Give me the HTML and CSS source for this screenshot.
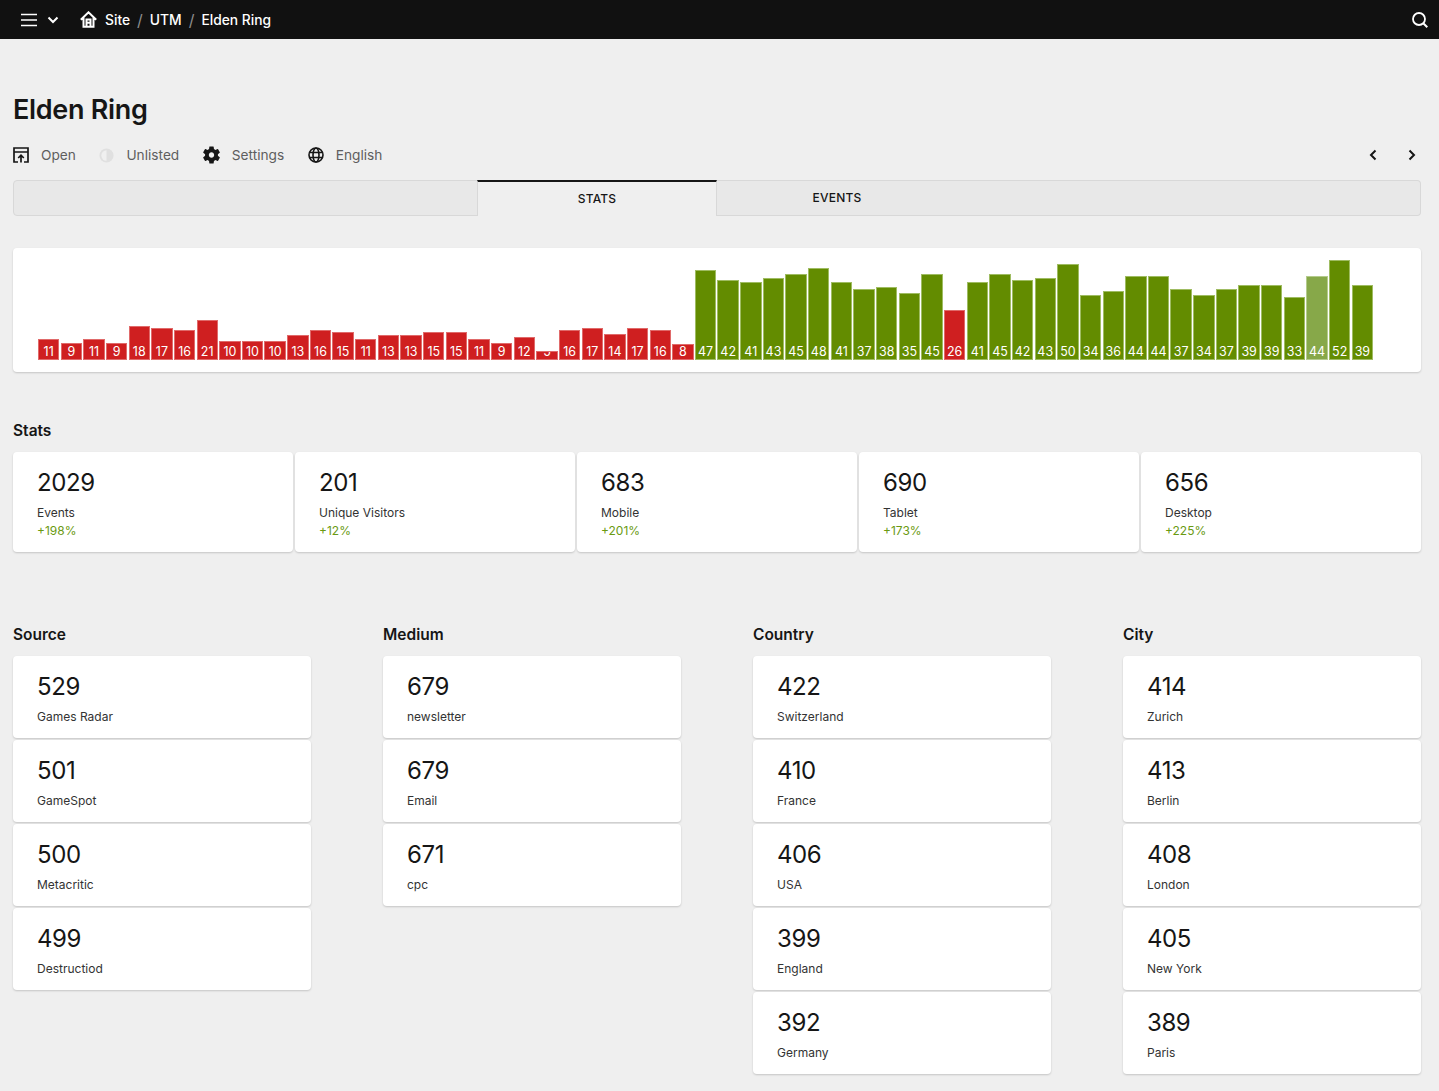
FILE: index.html
```html
<!DOCTYPE html>
<html lang="en">
<head>
<meta charset="utf-8">
<title>Elden Ring</title>
<link rel="stylesheet" href="styles.css">
</head>
<body>
<header class="topbar">
  <svg class="ico-menu" width="18" height="14" viewBox="0 0 18 14"><path d="M1 1.500h16M1 7h16M1 12.500h16" stroke="#fff" stroke-width="1.700" fill="none"/></svg>
  <svg class="ico-chev" width="12" height="8" viewBox="0 0 12 8"><path d="M1.500 1.500 6 6l4.500-4.500" stroke="#fff" stroke-width="2" fill="none"/></svg>
  <svg class="ico-home" width="17" height="17" viewBox="0 0 17 17"><path d="M.8 8.800 8.500 1.300 16.200 8.800M3.500 6.500V15.700H13.500V6.500M6.500 15.700V8.500H10.500V15.700M6.500 11.700H10.500" stroke="#fff" stroke-width="2" fill="none"/></svg>
  <nav class="crumbs"><span>Site</span><i>/</i><span>UTM</span><i>/</i><span>Elden Ring</span></nav>
  <svg class="ico-search" width="18" height="18" viewBox="0 0 18 18"><circle cx="8" cy="8" r="6" stroke="#fff" stroke-width="1.800" fill="none"/><path d="m12.500 12.500 3.800 3.800" stroke="#fff" stroke-width="2" fill="none"/></svg>
</header>

<main class="page">
  <h1 class="title">Elden Ring</h1>

  <div class="meta">
    <div class="meta-item">
      <svg width="16" height="16" viewBox="0 0 16 16"><path d="M5 15H1V1H15V15H11M1 5H15" stroke="#161616" stroke-width="1.700" fill="none"/><path d="M8 15.500V8.500M5.200 11 8 8.200 10.800 11" stroke="#161616" stroke-width="1.700" fill="none"/></svg>
      <span>Open</span>
    </div>
    <div class="meta-item">
      <svg width="15" height="15" viewBox="0 0 16 16"><circle cx="8" cy="8" r="7.500" fill="#e0e0e0"/><path d="M8 2.500a5.500 5.500 0 0 0 0 11z" fill="#f0f0f0"/></svg>
      <span>Unlisted</span>
    </div>
    <div class="meta-item">
      <svg width="17" height="18" viewBox="2.500 2 19 20"><path fill="#161616" d="M19.140 12.940c.04-.3.06-.61.06-.94 0-.32-.02-.64-.07-.94l2.030-1.580a.49.49 0 0 0 .12-.61l-1.920-3.320a.488.488 0 0 0-.59-.22l-2.390.96c-.5-.38-1.030-.7-1.620-.94l-.36-2.540a.484.484 0 0 0-.48-.41h-3.840c-.24 0-.43.17-.47.41l-.36 2.540c-.59.24-1.130.57-1.620.94l-2.390-.96c-.22-.08-.47 0-.59.22L2.740 8.870c-.12.21-.08.47.12.61l2.030 1.580c-.05.3-.09.63-.09.94s.02.64.07.94l-2.030 1.580a.49.49 0 0 0-.12.61l1.920 3.320c.12.22.37.29.59.22l2.390-.96c.5.38 1.030.7 1.620.94l.36 2.540c.05.24.24.41.48.41h3.840c.24 0 .44-.17.47-.41l.36-2.540c.59-.24 1.130-.56 1.620-.94l2.390.96c.22.08.47 0 .59-.22l1.920-3.320c.12-.22.07-.47-.12-.61l-2.010-1.580zM12 15c-1.650 0-3-1.350-3-3s1.350-3 3-3 3 1.350 3 3-1.350 3-3 3z"/></svg>
      <span>Settings</span>
    </div>
    <div class="meta-item">
      <svg width="16" height="16" viewBox="0 0 16 16"><g stroke="#161616" stroke-width="1.600" fill="none"><circle cx="8" cy="8" r="7"/><ellipse cx="8" cy="8" rx="3" ry="7"/><path d="M1.500 5.500h13M1.500 10.500h13"/></g></svg>
      <span>English</span>
    </div>
    <div class="pager">
      <svg width="10" height="12" viewBox="0 0 10 12"><path d="M7.500 1.500 3 6l4.500 4.500" stroke="#161616" stroke-width="2" fill="none"/></svg>
      <svg width="10" height="12" viewBox="0 0 10 12"><path d="M2.500 1.500 7 6l-4.500 4.500" stroke="#161616" stroke-width="2" fill="none"/></svg>
    </div>
  </div>

  <div class="tabs">
    <div class="tab-fill tab-lead"></div>
    <div class="tab tab-active">STATS</div>
    <div class="tab tab-plain">EVENTS</div>
    <div class="tab-fill tab-trail"></div>
  </div>

  <section class="card chart">
    <div class="bars">
      <div class="bar lo" style="height:21px"><span>11</span></div>
      <div class="bar lo" style="height:17px"><span>9</span></div>
      <div class="bar lo" style="height:21px"><span>11</span></div>
      <div class="bar lo" style="height:17px"><span>9</span></div>
      <div class="bar lo" style="height:34px"><span>18</span></div>
      <div class="bar lo" style="height:32px"><span>17</span></div>
      <div class="bar lo" style="height:30px"><span>16</span></div>
      <div class="bar lo" style="height:40px"><span>21</span></div>
      <div class="bar lo" style="height:19px"><span>10</span></div>
      <div class="bar lo" style="height:19px"><span>10</span></div>
      <div class="bar lo" style="height:19px"><span>10</span></div>
      <div class="bar lo" style="height:25px"><span>13</span></div>
      <div class="bar lo" style="height:30px"><span>16</span></div>
      <div class="bar lo" style="height:28px"><span>15</span></div>
      <div class="bar lo" style="height:21px"><span>11</span></div>
      <div class="bar lo" style="height:25px"><span>13</span></div>
      <div class="bar lo" style="height:25px"><span>13</span></div>
      <div class="bar lo" style="height:28px"><span>15</span></div>
      <div class="bar lo" style="height:28px"><span>15</span></div>
      <div class="bar lo" style="height:21px"><span>11</span></div>
      <div class="bar lo" style="height:17px"><span>9</span></div>
      <div class="bar lo" style="height:23px"><span>12</span></div>
      <div class="bar lo" style="height:9px"><span>5</span></div>
      <div class="bar lo" style="height:30px"><span>16</span></div>
      <div class="bar lo" style="height:32px"><span>17</span></div>
      <div class="bar lo" style="height:26px"><span>14</span></div>
      <div class="bar lo" style="height:32px"><span>17</span></div>
      <div class="bar lo" style="height:30px"><span>16</span></div>
      <div class="bar lo" style="height:16px"><span>8</span></div>
      <div class="bar hi" style="height:90px"><span>47</span></div>
      <div class="bar hi" style="height:80px"><span>42</span></div>
      <div class="bar hi" style="height:78px"><span>41</span></div>
      <div class="bar hi" style="height:82px"><span>43</span></div>
      <div class="bar hi" style="height:86px"><span>45</span></div>
      <div class="bar hi" style="height:92px"><span>48</span></div>
      <div class="bar hi" style="height:78px"><span>41</span></div>
      <div class="bar hi" style="height:71px"><span>37</span></div>
      <div class="bar hi" style="height:73px"><span>38</span></div>
      <div class="bar hi" style="height:67px"><span>35</span></div>
      <div class="bar hi" style="height:86px"><span>45</span></div>
      <div class="bar lo" style="height:50px"><span>26</span></div>
      <div class="bar hi" style="height:78px"><span>41</span></div>
      <div class="bar hi" style="height:86px"><span>45</span></div>
      <div class="bar hi" style="height:80px"><span>42</span></div>
      <div class="bar hi" style="height:82px"><span>43</span></div>
      <div class="bar hi" style="height:96px"><span>50</span></div>
      <div class="bar hi" style="height:65px"><span>34</span></div>
      <div class="bar hi" style="height:69px"><span>36</span></div>
      <div class="bar hi" style="height:84px"><span>44</span></div>
      <div class="bar hi" style="height:84px"><span>44</span></div>
      <div class="bar hi" style="height:71px"><span>37</span></div>
      <div class="bar hi" style="height:65px"><span>34</span></div>
      <div class="bar hi" style="height:71px"><span>37</span></div>
      <div class="bar hi" style="height:75px"><span>39</span></div>
      <div class="bar hi" style="height:75px"><span>39</span></div>
      <div class="bar hi" style="height:63px"><span>33</span></div>
      <div class="bar hi hover" style="height:84px"><span>44</span></div>
      <div class="bar hi" style="height:100px"><span>52</span></div>
      <div class="bar hi" style="height:75px"><span>39</span></div>
    </div>
  </section>

  <h2 class="heading stats-heading">Stats</h2>
  <section class="stats">
    <div class="card stat"><div class="num">2029</div><div class="label">Events</div><div class="delta">+198%</div></div>
    <div class="card stat"><div class="num">201</div><div class="label">Unique Visitors</div><div class="delta">+12%</div></div>
    <div class="card stat"><div class="num">683</div><div class="label">Mobile</div><div class="delta">+201%</div></div>
    <div class="card stat"><div class="num">690</div><div class="label">Tablet</div><div class="delta">+173%</div></div>
    <div class="card stat"><div class="num">656</div><div class="label">Desktop</div><div class="delta">+225%</div></div>
  </section>

  <section class="columns">
    <div class="col">
      <h2 class="heading">Source</h2>
      <div class="card item"><div class="num">529</div><div class="label">Games Radar</div></div>
      <div class="card item"><div class="num">501</div><div class="label">GameSpot</div></div>
      <div class="card item"><div class="num">500</div><div class="label">Metacritic</div></div>
      <div class="card item"><div class="num">499</div><div class="label">Destructiod</div></div>
    </div>
    <div class="col">
      <h2 class="heading">Medium</h2>
      <div class="card item"><div class="num">679</div><div class="label">newsletter</div></div>
      <div class="card item"><div class="num">679</div><div class="label">Email</div></div>
      <div class="card item"><div class="num">671</div><div class="label">cpc</div></div>
    </div>
    <div class="col">
      <h2 class="heading">Country</h2>
      <div class="card item"><div class="num">422</div><div class="label">Switzerland</div></div>
      <div class="card item"><div class="num">410</div><div class="label">France</div></div>
      <div class="card item"><div class="num">406</div><div class="label">USA</div></div>
      <div class="card item"><div class="num">399</div><div class="label">England</div></div>
      <div class="card item"><div class="num">392</div><div class="label">Germany</div></div>
    </div>
    <div class="col">
      <h2 class="heading">City</h2>
      <div class="card item"><div class="num">414</div><div class="label">Zurich</div></div>
      <div class="card item"><div class="num">413</div><div class="label">Berlin</div></div>
      <div class="card item"><div class="num">408</div><div class="label">London</div></div>
      <div class="card item"><div class="num">405</div><div class="label">New York</div></div>
      <div class="card item"><div class="num">389</div><div class="label">Paris</div></div>
    </div>
  </section>
</main>
</body>
</html>
```
FILE: styles.css
```css
* { box-sizing: border-box; }
html, body { margin: 0; height: 1091px; overflow: hidden; }
body { background: #efefef; color: #161616; font-family: Inter, "Liberation Sans", sans-serif; }
svg { display: block; flex: none; }

.topbar { display: flex; align-items: center; height: 39px; background: #111; color: #fff; padding: 0 10px 0 20px; }
.ico-chev { margin-left: 9px; }
.ico-home { margin-left: 21px; }
.crumbs { display: flex; align-items: center; margin-left: 8px; font-size: 13.8px; font-weight: 500; gap: 7px; }
.crumbs i { font-style: normal; color: #8d8d8d; font-weight: 400; font-size: 16px; }
.ico-search { margin-left: auto; }

.page { padding: 0 18px 0 13px; }
.title { margin: 0; padding-top: 54px; font-size: 27px; line-height: 34px; font-weight: 600; letter-spacing: -0.3px; }

.meta { display: flex; align-items: center; height: 24px; margin-top: 16px; gap: 23.5px; }
.meta-item { display: flex; align-items: center; gap: 12px; font-size: 13.7px; color: #5e5e5e; }
.pager { display: flex; gap: 29px; margin-left: auto; padding-right: 4px; }

.tabs { display: flex; height: 36px; margin-top: 13px; font-size: 12px; font-weight: 500; letter-spacing: 0.2px; }
.tab-fill, .tab { background: #e8e8e8; border: 1px solid #d8d8d8; border-left: 0; }
.tab-lead { width: 465px; border-left: 1px solid #d8d8d8; border-radius: 4px 0 0 4px; }
.tab-trail { flex: 1; border-radius: 0 4px 4px 0; }
.tab { width: 240px; display: flex; align-items: center; justify-content: center; padding-bottom: 2px; }
.tab-plain { border-right: 0; }
.tab-active { background: #efefef; border-top: 2px solid #161616; border-bottom: 0; border-left: 1px solid #d8d8d8; margin-left: -1px; }

.card { background: #fff; border-radius: 4px; box-shadow: 0 1px 2px rgba(0, 0, 0, 0.18); }
.chart { height: 124px; margin-top: 32px; padding: 0 24px 12px 25px; display: flex; align-items: flex-end; }
.bars { width: 100%; display: grid; grid-template-columns: repeat(60, 1fr); align-items: end; }
.bar { position: relative; margin-right: 1.3px; overflow: hidden; border: 1px solid; color: #fff; font-size: 12.5px; line-height: 12px; text-align: center; }
.bar span { position: absolute; left: -2px; right: -2px; bottom: 1px; }
.lo { background: #cf1f20; border-color: #e06a6a; }
.hi { background: #638c00; border-color: #9fbc62; }
.hover { background: #87a849; border-color: #b4cb8c; }

.heading { margin: 0; font-size: 15.5px; line-height: 22px; font-weight: 600; }
.stats-heading { margin-top: 48px; }
.stats { display: grid; grid-template-columns: repeat(5, 1fr); gap: 2px; margin-top: 10px; }
.stat { height: 100px; padding: 15px 24px 0; }
.num { font-size: 24px; line-height: 32px; font-weight: 400; letter-spacing: -0.4px; }
.label { margin-top: 5px; font-size: 12px; line-height: 18px; color: #333; }
.delta { font-size: 12px; line-height: 18px; color: #6a9a12; }

.columns { display: grid; grid-template-columns: repeat(4, 298px); column-gap: 72px; margin-top: 72px; align-items: start; }
.col { display: flex; flex-direction: column; gap: 2px; }
.col .heading { margin-bottom: 8px; }
.item { height: 82px; padding: 15px 24px 0; }
```
